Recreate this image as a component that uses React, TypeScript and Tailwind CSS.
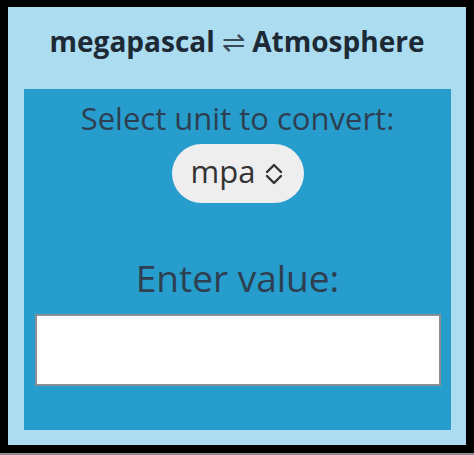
import React from 'react';

function UpDown() {
  return (
    <svg width="18" height="24" viewBox="0 0 18 24" fill="none" stroke="#333333" strokeWidth="2.4" strokeLinecap="round" strokeLinejoin="round">
      <path d="M2 10 L9 3 L16 10" />
      <path d="M2 14 L9 21 L16 14" />
    </svg>
  );
}

export default function App() {
  return (
    <div className="w-[474px] h-[455px] bg-black pt-[7px] px-[8px] pb-[8px] border-b-2 border-[#8c8c8c] font-['Open_Sans',sans-serif]">
      <div className="h-[438px] bg-[#acdcef] flex flex-col">
        <h1 className="pt-[15px] h-[82px] text-center text-[28px] leading-[38px] font-bold text-[#1d2a36]">
          megapascal <span className="font-extralight text-[#3a4a58] font-['DejaVu_Sans',sans-serif]">⇌</span> Atmosphere
        </h1>
        <div className="ml-[16px] mr-[15px] h-[341px] bg-[#269dcd] flex flex-col items-center pt-[8px]">
          <p className="text-[31px] leading-[42px] text-[#2d3f50]">Select unit to convert:</p>
          <div className="mt-[5px] h-[59px] w-[132px] rounded-full bg-[#eeeeee] flex items-center pl-[19px] pr-[21px] justify-between">
            <span className="text-[31px] leading-none text-[#333333] -mt-[4px]">mpa</span>
            <UpDown />
          </div>
          <p className="mt-[50px] text-[37px] leading-[50px] text-[#2d3f50]">Enter value:</p>
          <input
            type="text"
            className="mt-[11px] w-[406px] h-[72px] bg-white border-2 border-[#8a8f94] outline-none"
          />
        </div>
      </div>
    </div>
  );
}
